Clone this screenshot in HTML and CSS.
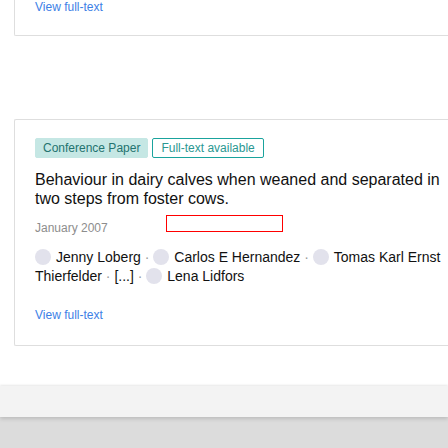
FILE: index.html
```html
<!DOCTYPE html>
<html lang="en">
<head>
<meta charset="utf-8">
<title>Publications</title>
<link rel="stylesheet" href="styles.css">
</head>
<body>
<div class="page">
  <div class="card card-cut">
    <a class="link" href="#">View full-text</a>
  </div>
  <div class="card card-item">
    <div class="badges">
      <span class="badge badge-type">Conference Paper</span>
      <span class="badge badge-full">Full-text available</span>
    </div>
    <div class="title">Behaviour in dairy calves when weaned and separated in two steps from foster cows.</div>
    <div class="meta"><span class="date">January 2007</span><span class="slot"></span></div>
    <div class="authors"><span class="author"><span class="avatar"></span>Jenny Loberg</span><span class="sep"> · </span><span class="author"><span class="avatar"></span>Carlos E Hernandez</span><span class="sep"> · </span><span class="author"><span class="avatar"></span>Tomas Karl Ernst Thierfelder</span><span class="sep"> · </span><span class="more">[...]</span><span class="sep"> · </span><span class="author"><span class="avatar"></span>Lena Lidfors</span></div>
    <a class="link link-bottom" href="#">View full-text</a>
  </div>
</div>
<div class="band"></div>
<div class="footer"></div>
</body>
</html>
```

FILE: styles.css
```css
html, body {
  margin: 0;
  padding: 0;
  overflow: hidden;
  background: #ffffff;
  font-family: "Liberation Sans", Arial, sans-serif;
  color: #111111;
}

.page {
  width: 448px;
  padding-bottom: 40px;
}

.card {
  margin-left: 14px;
  border: 1px solid #dedede;
  border-right: 0;
  border-radius: 2px 0 0 2px;
  padding: 18px 0 23px 20px;
  background: #ffffff;
}

.card-cut {
  border-top: 0;
  padding-top: 0;
  padding-bottom: 21px;
  border-radius: 0 0 0 2px;
}

.card-item {
  margin-top: 83px;
}

.link {
  display: block;
  font-size: 12px;
  line-height: 14px;
  color: #3d7fe6;
  text-decoration: none;
}

.link-bottom {
  margin-top: 22px;
}

.badges {
  display: flex;
  gap: 4px;
}

.badge {
  display: inline-block;
  font-size: 12px;
  line-height: 14px;
  padding: 2px 7px;
  border: 1px solid transparent;
  border-radius: 2px;
}

.badge-type {
  background: #c5e7e4;
  border-color: #c5e7e4;
  color: #23736f;
}

.badge-full {
  border-color: #1aa39d;
  color: #2a9892;
  padding: 2px 8px;
}

.title {
  margin-top: 12px;
  font-size: 16px;
  line-height: 19px;
  color: #111111;
}

.meta {
  margin-top: 7px;
  font-size: 12px;
  line-height: 14px;
}

.date {
  color: #8d8d8d;
}

.slot {
  display: inline-block;
  width: 115px;
  height: 15px;
  margin-left: 58px;
  border: 1px solid #ff0000;
}

.authors {
  margin-top: 13px;
  font-size: 14px;
  line-height: 19px;
  color: #111111;
}

.avatar {
  display: inline-block;
  width: 16px;
  height: 16px;
  border-radius: 50%;
  background: #e2e2ec;
  margin-right: 5px;
  vertical-align: text-bottom;
}

.sep {
  color: #9a9a9a;
}

.band {
  position: relative;
  z-index: 1;
  height: 31px;
  background: #f3f3f3;
  box-shadow: 0 -1px 2px rgba(0, 0, 0, 0.08), 0 2px 4px rgba(0, 0, 0, 0.14);
}

.footer {
  height: 31px;
  background: #dcdcdc;
}
```
